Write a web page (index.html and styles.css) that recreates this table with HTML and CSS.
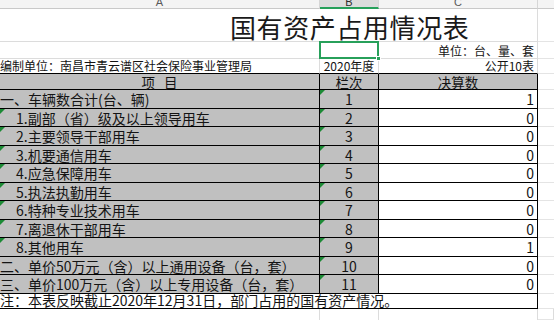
FILE: index.html
```html
<!DOCTYPE html>
<html lang="zh-CN">
<head>
<meta charset="utf-8">
<title>国有资产占用情况表</title>
<link rel="stylesheet" href="styles.css">
</head>
<body>
<div class="sheet">
  <div class="ch">A</div>
  <div class="ch ch-sel">B</div>
  <div class="ch">C</div>
  <div class="ch ch-x"></div>

  <div class="c title">国有资产占用情况表</div>
  <div class="c x"></div>

  <div class="c g"></div>
  <div class="c g sel"><span class="handle"></span></div>
  <div class="c g r sm">单位：台、量、套</div>
  <div class="c x"></div>

  <div class="c g3 sm">编制单位：南昌市青云谱区社会保险事业管理局</div>
  <div class="c g3 m sm">2020年度</div>
  <div class="c g3 r sm">公开10表</div>
  <div class="c x"></div>

  <div class="c t gr m hd">项&nbsp;&nbsp;&nbsp;目</div>
  <div class="c t gr m hd">栏次</div>
  <div class="c t gr m hd">决算数</div>
  <div class="c x"></div>

  <div class="c t gr">一、车辆数合计(台、辆)</div>
  <div class="c t gr m mk">1</div>
  <div class="c t r">1</div>
  <div class="c x"></div>

  <div class="c t gr in mk">1.副部（省）级及以上领导用车</div>
  <div class="c t gr m mk">2</div>
  <div class="c t r">0</div>
  <div class="c x"></div>

  <div class="c t gr in mk">2.主要领导干部用车</div>
  <div class="c t gr m mk">3</div>
  <div class="c t r">0</div>
  <div class="c x"></div>

  <div class="c t gr in mk">3.机要通信用车</div>
  <div class="c t gr m mk">4</div>
  <div class="c t r">0</div>
  <div class="c x"></div>

  <div class="c t gr in mk">4.应急保障用车</div>
  <div class="c t gr m mk">5</div>
  <div class="c t r">0</div>
  <div class="c x"></div>

  <div class="c t gr in mk">5.执法执勤用车</div>
  <div class="c t gr m mk">6</div>
  <div class="c t r">0</div>
  <div class="c x"></div>

  <div class="c t gr in mk">6.特种专业技术用车</div>
  <div class="c t gr m mk">7</div>
  <div class="c t r">0</div>
  <div class="c x"></div>

  <div class="c t gr in mk">7.离退休干部用车</div>
  <div class="c t gr m mk">8</div>
  <div class="c t r">0</div>
  <div class="c x"></div>

  <div class="c t gr in mk">8.其他用车</div>
  <div class="c t gr m mk">9</div>
  <div class="c t r">1</div>
  <div class="c x"></div>

  <div class="c t gr">二、单价50万元（含）以上通用设备（台，套）</div>
  <div class="c t gr m mk">10</div>
  <div class="c t r">0</div>
  <div class="c x"></div>

  <div class="c t gr">三、单价100万元（含）以上专用设备（台，套）</div>
  <div class="c t gr m mk">11</div>
  <div class="c t r">0</div>
  <div class="c x"></div>

  <div class="c t note">注：本表反映截止2020年12月31日，部门占用的国有资产情况。</div>
  <div class="c x"></div>

  <div class="c e"></div>
  <div class="c e"></div>
  <div class="c e"></div>
  <div class="c e x"></div>
</div>
</body>
</html>
```

FILE: styles.css
```css
* { box-sizing: border-box; }

html, body {
  margin: 0;
  padding: 0;
  background: #ffffff;
}

body {
  width: 554px;
  height: 320px;
  overflow: hidden;
  font-family: "Noto Sans CJK SC", "Noto Sans", sans-serif;
  color: #141414;
}

.sheet {
  display: grid;
  grid-template-columns: 320px 59px 159px 16px;
  grid-template-rows: 9px 33px 17px 15px 16px repeat(11, 18.5px) 15.5px 11px;
  width: 554px;
  height: 320px;
}

/* column header */
.ch {
  background: #f4f4f4;
  border-bottom: 1px solid #c9c9c9;
  border-right: 1px solid #d6d6d6;
  font-family: "Liberation Sans", sans-serif;
  font-size: 11px;
  line-height: 5px;
  color: #5a5a5a;
  text-align: center;
  overflow: hidden;
}
.ch-sel {
  background: #dcdcdc;
  border-bottom: 2px solid #27a05a;
  color: #2c2c2c;
}
.ch-x { border-right: none; }

/* generic cell */
.c {
  position: relative;
  display: flex;
  align-items: center;
  font-size: 14px;
  line-height: 14px;
  white-space: nowrap;
  overflow: visible;
  padding-top: 1px;
}

.sm { font-size: 12px; line-height: 12px; }

.title {
  grid-column: 1 / 4;
  font-size: 26px;
  line-height: 26px;
  letter-spacing: 0.6px;
  padding-left: 230px;
  padding-top: 4px;
  border-bottom: 1px solid #dcdcdc;
  border-right: 1px solid #dcdcdc;
  color: #1a1a1a;
}

.g {
  border-bottom: 1px solid #dcdcdc;
  border-right: 1px solid #dcdcdc;
}
.g3 {
  border-bottom: 1px solid #000;
  border-right: 1px solid #dcdcdc;
  padding-top: 0;
  align-items: flex-end;
  padding-bottom: 1px;
}

.x {
  border-bottom: 1px solid #e4e4e4;
}

.r { justify-content: flex-end; padding-right: 3px; }
.m { justify-content: center; }

.t {
  border-right: 1px solid #000;
  border-bottom: 1px solid #000;
}
.gr { background: #c0c0c0; }
.hd {
  padding-top: 1px;
  font-size: 13.5px;
  line-height: 13px;
}
.in { padding-left: 16px; }

.note {
  grid-column: 1 / 4;
  background: #ffffff;
  padding-top: 0;
  line-height: 13px;
}

.e { border-right: 1px solid #dcdcdc; }

/* green "number stored as text" marker */
.mk::before {
  content: "";
  position: absolute;
  top: 0;
  left: 0;
  border-top: 5px solid #1c8a35;
  border-right: 5px solid transparent;
}

/* selected cell */
.sel::after {
  content: "";
  position: absolute;
  top: -1px;
  left: -1px;
  right: -1px;
  bottom: -1px;
  border: 2px solid #27a05a;
}
.handle {
  position: absolute;
  right: -3px;
  bottom: -3px;
  width: 5px;
  height: 5px;
  background: #27a05a;
  border: 1px solid #ffffff;
  z-index: 2;
}
```
